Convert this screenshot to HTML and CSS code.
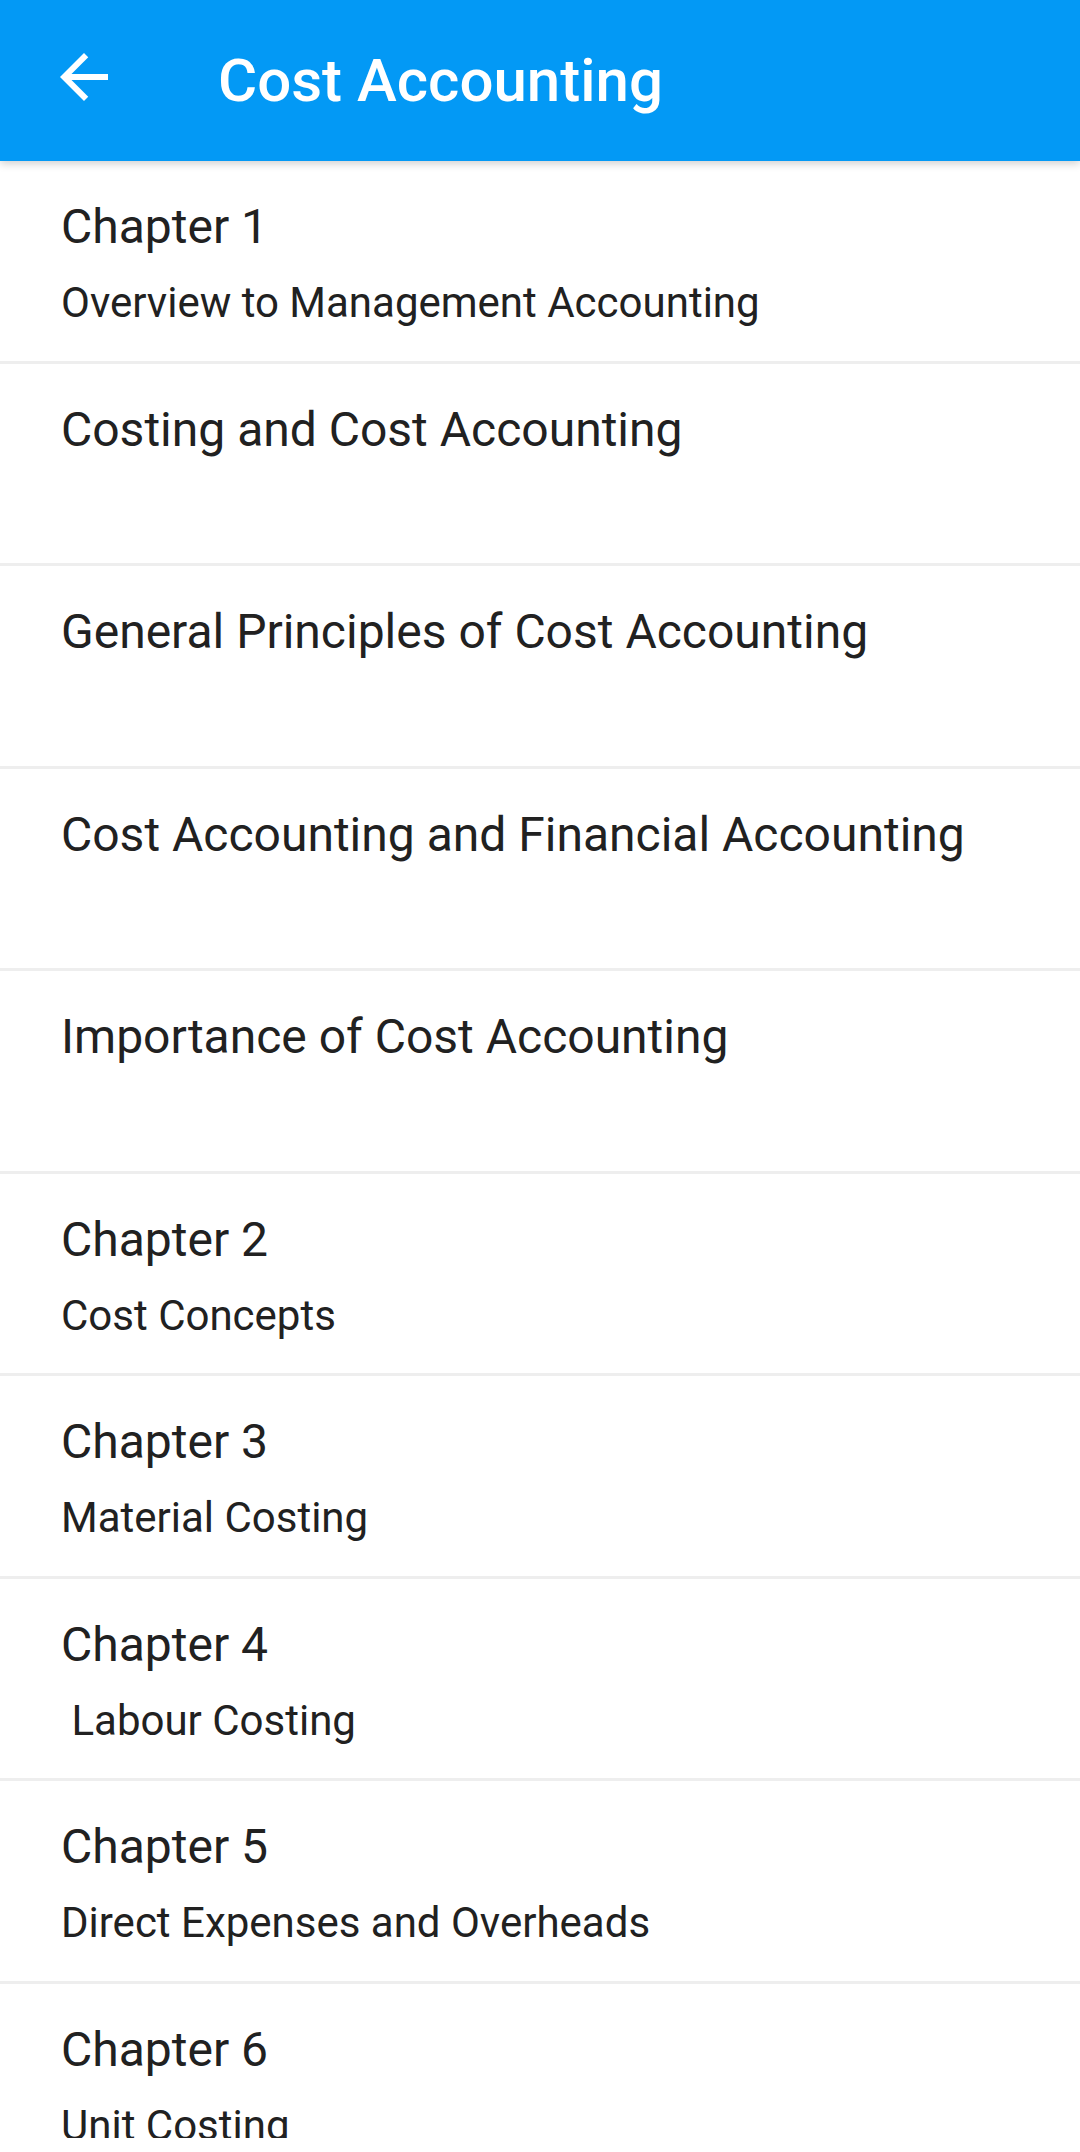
FILE: index.html
```html
<!DOCTYPE html>
<html>
<head>
<meta charset="utf-8">
<link rel="stylesheet" href="styles.css">
</head>
<body>
<div class="screen">
<header class="appbar">
  <svg class="back" viewBox="0 0 24 24" width="72" height="72"><path fill="#fff" d="M20 11H7.83l5.59-5.59L12 4l-8 8 8 8 1.41-1.41L7.83 13H20v-2z"/></svg>
  <h1 class="title">Cost Accounting</h1>
</header>
<ul class="list">
  <li class="item"><div class="item-title">Chapter 1</div><div class="item-sub">Overview to Management Accounting</div></li>
  <li class="item"><div class="item-title">Costing and Cost Accounting</div></li>
  <li class="item"><div class="item-title">General Principles of Cost Accounting</div></li>
  <li class="item"><div class="item-title">Cost Accounting and Financial Accounting</div></li>
  <li class="item"><div class="item-title">Importance of Cost Accounting</div></li>
  <li class="item"><div class="item-title">Chapter 2</div><div class="item-sub">Cost Concepts</div></li>
  <li class="item"><div class="item-title">Chapter 3</div><div class="item-sub">Material Costing</div></li>
  <li class="item"><div class="item-title">Chapter 4</div><div class="item-sub"> Labour Costing</div></li>
  <li class="item"><div class="item-title">Chapter 5</div><div class="item-sub">Direct Expenses and Overheads</div></li>
  <li class="item"><div class="item-title">Chapter 6</div><div class="item-sub">Unit Costing</div></li>
</ul>
</div>
</body>
</html>
```
FILE: styles.css
```css
html, body {
  margin: 0;
  padding: 0;
  background: #fff;
  overflow: hidden;
  height: 2152px;
  font-family: Roboto, "Noto Sans", sans-serif;
}
.screen {
  height: 2138px;
  overflow: hidden;
}
.appbar {
  position: relative;
  z-index: 2;
  height: 161px;
  background: #0399f5;
  display: flex;
  align-items: center;
  padding-left: 48px;
  box-shadow: 0 3px 8px rgba(0,0,0,0.18);
}
.back {
  display: block;
  margin-bottom: 7px;
}
.title {
  margin: 0 0 0 98px;
  font-size: 60px;
  font-weight: 500;
  color: #fff;
  line-height: normal;
}
.list {
  list-style: none;
  margin: 0;
  padding: 0;
}
.item {
  height: 202.5px;
  box-sizing: border-box;
  border-bottom: 3.5px solid #eeeeee;
  padding: 38px 0 0 61px;
  color: #212121;
}
.item-title {
  font-size: 48px;
  line-height: 56px;
}
.item-sub {
  font-size: 42px;
  line-height: 50px;
  margin-top: 23px;
  white-space: pre;
}
```
